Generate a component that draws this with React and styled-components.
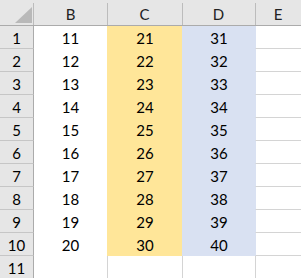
import React from "react";
import styled, { createGlobalStyle } from "styled-components";

const GlobalStyle = createGlobalStyle`
  html, body {
    margin: 0;
    padding: 0;
    background: #ffffff;
  }
  body {
    font-family: Lato, "Open Sans", sans-serif;
  }
`;

const Colors = {
  header: "#e6e6e6",
  headerEdge: "#ababab",
  headerSep: "#bcbcbc",
  rowSep: "#c6c6c6",
  grid: "#d4d4d4",
  yellow: "#ffe699",
  blue: "#d9e1f2",
  white: "#ffffff",
};

const Sheet = styled.div`
  display: grid;
  grid-template-columns: 34px 73px 75px 73px 46px;
  grid-template-rows: 26px repeat(11, 23px);
  width: 301px;
  height: 278px;
  overflow: hidden;
  font-size: 15px;
  color: #000;
`;

const Corner = styled.div`
  box-sizing: border-box;
  border-bottom: 1px solid ${Colors.headerEdge};
  background: linear-gradient(${Colors.headerSep}, ${Colors.headerSep}) right 3px / 1px 22px no-repeat,
    ${Colors.header};
  display: flex;
  align-items: flex-end;
  justify-content: flex-end;
  padding: 0 2px 2px 0;
`;

const ColHeader = styled.div`
  box-sizing: border-box;
  border-bottom: 1px solid ${Colors.headerEdge};
  background: ${(p) =>
      p.$sep
        ? `linear-gradient(${Colors.headerSep}, ${Colors.headerSep}) left 3px / 1px 22px no-repeat,`
        : ""}
    ${Colors.header};
  display: flex;
  align-items: center;
  justify-content: center;
  padding-top: 2px;
  color: #222;
`;

const RowHeader = styled.div`
  box-sizing: border-box;
  background: ${Colors.header};
  border-right: 1px solid ${Colors.headerEdge};
  border-bottom: 1px solid ${Colors.rowSep};
  display: flex;
  align-items: center;
  justify-content: center;
  padding-top: 1px;
`;

const Cell = styled.div`
  box-sizing: border-box;
  background: ${(p) => p.$fill || "transparent"};
  border-bottom: 1px solid ${(p) => p.$fill || Colors.grid};
  border-left: ${(p) => (p.$left ? `1px solid ${p.$left}` : "none")};
  display: flex;
  align-items: flex-end;
  justify-content: center;
  line-height: 1;
  padding-bottom: 2px;
`;

const columns = ["B", "C", "D", "E"];
const rows = Array.from({ length: 11 }, (_, i) => i + 1);

function Triangle() {
  return (
    <svg width="17" height="16" viewBox="0 0 17 16">
      <polygon points="17,0 17,16 0,16" fill="#b9b9b9" />
    </svg>
  );
}

export default function App() {
  return (
    <>
      <GlobalStyle />
      <Sheet>
        <Corner>
          <Triangle />
        </Corner>
        {columns.map((c, i) => (
          <ColHeader key={c} $sep={i > 0}>
            {c}
          </ColHeader>
        ))}
        {rows.map((r) => {
          const filled = r <= 10;
          return (
            <React.Fragment key={r}>
              <RowHeader>{r}</RowHeader>
              <Cell $fill={filled ? Colors.white : null}>
                {filled ? 10 + r : ""}
              </Cell>
              <Cell
                $fill={filled ? Colors.yellow : null}
                $left={filled ? Colors.yellow : Colors.grid}
              >
                {filled ? 20 + r : ""}
              </Cell>
              <Cell
                $fill={filled ? Colors.blue : null}
                $left={filled ? Colors.blue : Colors.grid}
              >
                {filled ? 30 + r : ""}
              </Cell>
              <Cell $left={filled ? Colors.blue : Colors.grid} />
            </React.Fragment>
          );
        })}
      </Sheet>
    </>
  );
}
